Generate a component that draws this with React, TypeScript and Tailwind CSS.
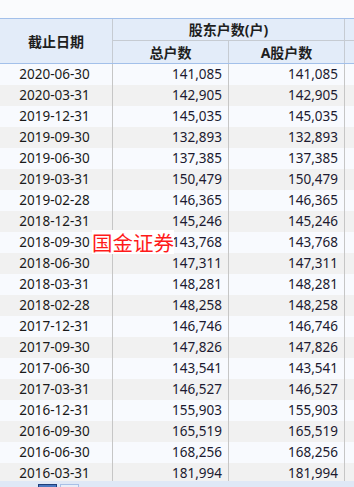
const rows: [string, string, string][] = [
  ["2020-06-30", "141,085", "141,085"],
  ["2020-03-31", "142,905", "142,905"],
  ["2019-12-31", "145,035", "145,035"],
  ["2019-09-30", "132,893", "132,893"],
  ["2019-06-30", "137,385", "137,385"],
  ["2019-03-31", "150,479", "150,479"],
  ["2019-02-28", "146,365", "146,365"],
  ["2018-12-31", "145,246", "145,246"],
  ["2018-09-30", "143,768", "143,768"],
  ["2018-06-30", "147,311", "147,311"],
  ["2018-03-31", "148,281", "148,281"],
  ["2018-02-28", "148,258", "148,258"],
  ["2017-12-31", "146,746", "146,746"],
  ["2017-09-30", "147,826", "147,826"],
  ["2017-06-30", "143,541", "143,541"],
  ["2017-03-31", "146,527", "146,527"],
  ["2016-12-31", "155,903", "155,903"],
  ["2016-09-30", "165,519", "165,519"],
  ["2016-06-30", "168,256", "168,256"],
  ["2016-03-31", "181,994", "181,994"],
];

const font = { fontFamily: '"Noto Sans", "Noto Sans CJK SC", sans-serif' };

export default function App() {
  return (
    <div className="relative flex h-[487px] w-[354px] flex-col overflow-hidden bg-[#fafbfd]" style={font}>
      <div className="h-[18px] shrink-0" />

      {/* header */}
      <div className="grid shrink-0 grid-cols-[113px_116px_116px_1fr] grid-rows-[22px_22px] border-y border-[#a3c0ea] bg-[#e3ecf9] text-[14px] font-bold text-[#1e1e1e]">
        <div className="row-span-2 flex items-center justify-center border-r border-[#c6cbd2]">截止日期</div>
        <div className="col-span-2 flex items-center justify-center border-r border-b border-[#c6cbd2]">股东户数(户)</div>
        <div className="border-b border-[#c6cbd2]" />
        <div className="flex items-center justify-center border-r border-[#c6cbd2]">总户数</div>
        <div className="flex items-center justify-center border-r border-[#c6cbd2]">A股户数</div>
        <div />
      </div>

      {/* body */}
      <div className="flex min-h-0 flex-1 flex-col overflow-hidden">
        {rows.map(([date, total, a], i) => (
          <div
            key={date}
            className={`grid h-[21px] shrink-0 grid-cols-[113px_116px_116px_1fr] text-[13.5px] leading-[21px] ${
              i % 2 === 0 ? "bg-[#f8fafe]" : "bg-[#f1f1f1]"
            }`}
          >
            <div className="border-r border-[#c6c6c6] pr-[3px] text-center text-[#1a1a1a]">{date}</div>
            <div className="border-r border-[#c6c6c6] pr-[6px] text-right text-[#1c1a30]">{total}</div>
            <div className="border-r border-[#c6c6c6] pr-[6px] text-right text-[#1c1a30]">{a}</div>
            <div />
          </div>
        ))}
      </div>

      {/* pager strip */}
      <div className="flex h-[6px] shrink-0 items-start gap-[3px] bg-[#dfe8f6] pl-[38px] pt-[3px]">
        <div className="h-[10px] w-[19px] border border-[#1f3f7a] bg-[#4a78c0]" />
        <div className="h-[10px] w-[19px] border border-[#a9c0e6] bg-[#e8eff9]" />
      </div>

      {/* watermark */}
      <div
        className="absolute left-[92px] top-[230px] bg-white text-[20.5px] leading-[24px] text-[#ff1a1a]"
        style={{ fontFamily: '"Noto Sans CJK SC", sans-serif' }}
      >
        国金证券
      </div>
    </div>
  );
}
